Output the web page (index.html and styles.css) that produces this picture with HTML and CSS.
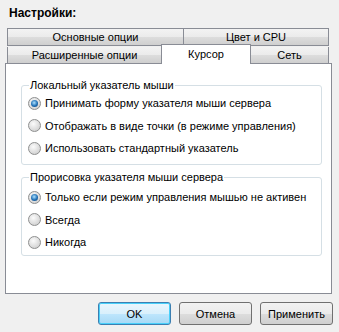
FILE: index.html
```html
<!DOCTYPE html>
<html lang="ru">
<head>
    <meta charset="UTF-8">
    <title>Настройки</title>
    <link rel="stylesheet" href="styles.css">
</head>
<body>

    <!-- Heading -->
    <div class="title">Настройки:</div>

    <!-- Tabs -->
    <div class="tabs">
        <div class="tab-row">
            <div class="tab tab-main">Основные опции</div>
            <div class="tab tab-color">Цвет и CPU</div>
        </div>
        <div class="tab-row">
            <div class="tab tab-ext">Расширенные опции</div>
            <div class="tab tab-cursor active">Курсор</div>
            <div class="tab tab-net">Сеть</div>
        </div>
    </div>

    <!-- Tab Panel -->
    <div class="panel">
        <fieldset class="group">
            <legend>Локальный указатель мыши</legend>
            <label class="radio"><span class="dot checked"></span>Принимать форму указателя мыши сервера</label>
            <label class="radio"><span class="dot"></span>Отображать в виде точки (в режиме управления)</label>
            <label class="radio"><span class="dot"></span>Использовать стандартный указатель</label>
        </fieldset>

        <fieldset class="group group-draw">
            <legend>Прорисовка указателя мыши сервера</legend>
            <label class="radio"><span class="dot checked"></span>Только если режим управления мышью не активен</label>
            <label class="radio"><span class="dot"></span>Всегда</label>
            <label class="radio"><span class="dot"></span>Никогда</label>
        </fieldset>
    </div>

    <!-- Buttons -->
    <div class="buttons">
        <button class="btn btn-default">OK</button>
        <button class="btn">Отмена</button>
        <button class="btn">Применить</button>
    </div>

</body>
</html>
```

FILE: styles.css
```css
/* Reset */
* {
    margin: 0;
    padding: 0;
    box-sizing: border-box;
}

body {
    background: #f0f0f0;
    font-family: 'Liberation Sans', Arial, sans-serif;
    font-size: 11px;
    color: #000;
    width: 339px;
    height: 332px;
    overflow: hidden;
    white-space: nowrap;
}

/* Heading */
.title {
    font-weight: bold;
    font-size: 12px;
    padding: 6px 0 0 9px;
    height: 28px;
}

/* Tabs */
.tabs {
    margin-left: 7px;
    width: 322px;
    position: relative;
    z-index: 1;
    margin-bottom: -1px;
}

.tab-row {
    display: flex;
    align-items: flex-end;
}

.tab {
    height: 18px;
    border: 1px solid #898c95;
    border-right: none;
    background: linear-gradient(#f3f3f3, #ebebeb 50%, #dddddd 51%, #cfcfcf);
    text-align: center;
    line-height: 16px;
}

.tab:last-child {
    border-right: 1px solid #898c95;
}

.tab-row + .tab-row .tab {
    border-top: none;
    height: 17px;
}

.tab-main { width: 176px; }
.tab-color { width: 146px; }
.tab-ext { width: 154px; }
.tab-net { width: 78px; }

.tab-row + .tab-row .tab.active {
    width: 90px;
    height: 20px;
    margin-top: -2px;
    border: 1px solid #898c95;
    border-bottom: none;
    background: #fff;
    line-height: 18px;
}

.tab-cursor + .tab {
    border-left: none;
}

/* Panel */
.panel {
    margin-left: 5px;
    width: 327px;
    height: 231px;
    background: #fff;
    border: 1px solid #898c95;
    padding: 14px 9px 0 15px;
}

.group {
    border: 1px solid #d5dfe5;
    border-radius: 3px;
    padding: 0 0 0 6px;
    height: 87px;
    margin-bottom: 5px;
}

.group-draw {
    padding-top: 2px;
    height: 86px;
}

.group legend {
    padding: 0 1px;
    margin-left: 1px;
    line-height: 14px;
}

.radio {
    display: flex;
    align-items: center;
    gap: 4px;
    height: 22.5px;
}

/* Radio Button */
.dot {
    width: 13px;
    height: 13px;
    border-radius: 50%;
    border: 1px solid #8e8f8f;
    background: radial-gradient(circle at 40% 35%, #fbfbfb, #d6d6d6 70%, #c4c4c4);
    position: relative;
    flex-shrink: 0;
}

.dot.checked::after {
    content: "";
    position: absolute;
    left: 2px;
    top: 2px;
    width: 7px;
    height: 7px;
    border-radius: 50%;
    background: radial-gradient(circle at 45% 40%, #aee2ff, #1f6fb5 55%, #123c6a);
}

/* Buttons */
.buttons {
    display: flex;
    gap: 8px;
    padding: 8px 0 0 98px;
}

.btn {
    width: 73px;
    height: 23px;
    border: 1px solid #707070;
    border-radius: 3px;
    background: linear-gradient(#f2f2f2, #ebebeb 50%, #dddddd 51%, #cfcfcf);
    font-family: 'Liberation Sans', Arial, sans-serif;
    font-size: 11px;
    font-weight: normal;
    color: #000;
}

.btn-default {
    border-color: #3c7fb1;
    background: linear-gradient(#eaf6fd, #d9f0fc 50%, #bee6fd 51%, #a7d9f5);
    box-shadow: inset 0 0 0 1px #48d0fa;
}
```
